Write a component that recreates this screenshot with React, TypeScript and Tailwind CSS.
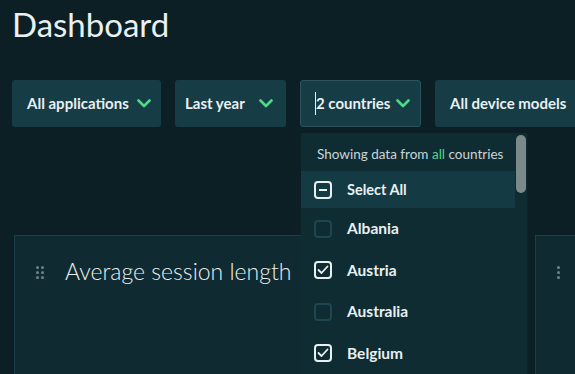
import { useState } from "react";

const countries = [
  { name: "Albania", checked: false },
  { name: "Austria", checked: true },
  { name: "Australia", checked: false },
  { name: "Belgium", checked: true },
];

function Chevron() {
  return (
    <svg width="14" height="9" viewBox="0 0 14 9" fill="none">
      <path d="M1.5 1.5L7 7L12.5 1.5" stroke="#4fd987" strokeWidth="2.6" strokeLinecap="round" strokeLinejoin="round" />
    </svg>
  );
}

function DragHandle() {
  return (
    <div className="grid grid-cols-2 gap-x-[2px] gap-y-[2px]">
      {[0, 1, 2, 3, 4, 5].map((i) => (
        <span key={i} className="w-[3px] h-[3px] rounded-full bg-[#6c858a]" />
      ))}
    </div>
  );
}

function Checkbox({ checked }: { checked: boolean }) {
  if (checked) {
    return (
      <span className="w-[18px] h-[18px] rounded-[4px] border-2 border-[#e9f0f1] flex items-center justify-center">
        <svg width="12" height="10" viewBox="0 0 12 10" fill="none">
          <path d="M1.5 5L4.5 8L10.5 1.5" stroke="#e9f0f1" strokeWidth="1.8" strokeLinecap="round" strokeLinejoin="round" />
        </svg>
      </span>
    );
  }
  return <span className="w-[18px] h-[18px] rounded-[4px] border-2 border-[#1d4650]" />;
}

export default function App() {
  const [open] = useState(true);

  return (
    <div className="w-[575px] h-[374px] overflow-hidden bg-[#0b1f24] font-['Lato',sans-serif] text-[#e9f0f1]">
      <h1 className="pl-[12px] pt-[4px] text-[33px] leading-[40px] font-normal">Dashboard</h1>

      <div className="flex gap-[14px] pl-[12px] mt-[36px]">
        <button className="w-[149px] h-[47px] shrink-0 flex items-center justify-between pl-[15px] pr-[10px] bg-[#163c45] rounded-[3px] text-[15px] font-bold whitespace-nowrap">
          All applications
          <Chevron />
        </button>
        <button className="w-[111px] h-[47px] shrink-0 flex items-center justify-between pl-[10px] pr-[13px] bg-[#163c45] rounded-[3px] text-[15px] font-bold whitespace-nowrap">
          Last year
          <Chevron />
        </button>
        <div className="relative shrink-0">
          <button className="w-[121px] h-[47px] flex items-center justify-between pl-[14px] pr-[10px] bg-[#163c45] border border-[#2a535c] rounded-[3px] text-[15px] font-bold whitespace-nowrap">
            <span className="flex items-center">
              <span className="w-px h-[23px] bg-[#e9f0f1]" />
              2 countries
            </span>
            <Chevron />
          </button>

          {open && (
            <div className="absolute left-[1px] top-[53px] w-[227px] h-[260px] z-10 bg-[#102c33] border-r border-[#0c2328] flex">
              <div className="flex-1 flex flex-col">
                <p className="pl-[16px] pt-[11px] h-[38px] text-[13.5px] text-[#c9d5d7] whitespace-nowrap">
                  Showing data from <span className="text-[#4fd987]">all</span> countries
                </p>
                <div className="h-[37px] flex items-center gap-[15px] pl-[13px] bg-[#143a43] text-[14.5px] font-bold">
                  <span className="w-[18px] h-[18px] rounded-[4px] border-2 border-[#e9f0f1] flex items-center justify-center">
                    <span className="w-[8px] h-[2px] bg-[#e9f0f1]" />
                  </span>
                  Select All
                </div>
                {countries.map((c) => (
                  <div key={c.name} className="h-[41.5px] flex items-center gap-[15px] pl-[13px] text-[15.5px] font-bold">
                    <Checkbox checked={c.checked} />
                    {c.name}
                  </div>
                ))}
              </div>
              <div className="w-[12px] pt-[2px] flex justify-center">
                <span className="w-[10px] h-[58px] rounded-full bg-[#7b898b]" />
              </div>
            </div>
          )}
        </div>
        <button className="w-[160px] h-[47px] shrink-0 flex items-center pl-[15px] bg-[#163c45] rounded-l-[3px] text-[15px] font-bold whitespace-nowrap">
          All device models
        </button>
      </div>

      <div className="flex gap-[13px] pl-[14px] mt-[108px]">
        <div className="w-[508px] h-[160px] shrink-0 bg-[#0f2a30] border border-[#1b3f47] flex items-start gap-[21px] pl-[21px] pt-[23px]">
          <div className="pt-[7px]">
            <DragHandle />
          </div>
          <h2 className="text-[23px] leading-[24px] font-light">Average session length</h2>
        </div>
        <div className="w-[100px] h-[160px] shrink-0 bg-[#0f2a30] border border-[#1b3f47] pl-[21px] pt-[30px]">
          <DragHandle />
        </div>
      </div>
    </div>
  );
}
